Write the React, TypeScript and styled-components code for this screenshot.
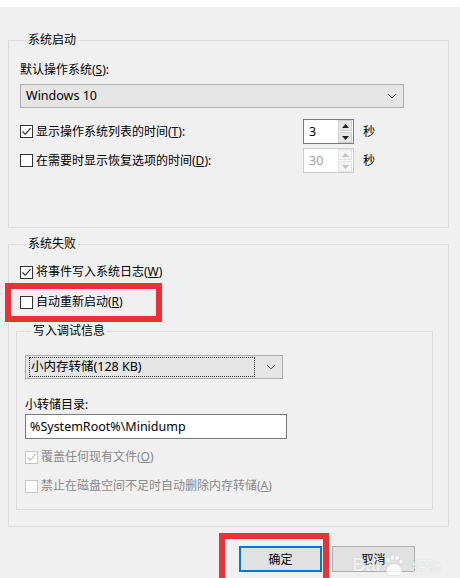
import React from 'react';
import styled, { createGlobalStyle } from 'styled-components';

const GlobalStyle = createGlobalStyle`
	body {
		margin: 0;
		background: #f0f0f0;
		font-family: "Noto Sans", "Noto Sans CJK SC", sans-serif;
		font-size: 12px;
		color: #000;
	}
`;

const Window = styled.div`
	position: relative;
	width: 460px;
	height: 578px;
	overflow: hidden;
	background: #f0f0f0;
`;

const TopStrip = styled.div`
	height: 7px;
	background: #fff;
`;

const Page = styled.div`
	padding: 0 11px 0 8px;
`;

const Group = styled.fieldset<{ $top: number; $bottom: number }>`
	margin: ${(p) => p.$top}px 0 0 0;
	padding: 0 11px ${(p) => p.$bottom}px 11px;
	border: 1px solid #dcdcdc;
	min-width: 0;
`;

const SubGroup = styled.fieldset`
	margin: 13px 0 0 -4px;
	width: 399px;
	padding: 0 8px 15px 8px;
	border: 1px solid #dcdcdc;
`;

const Legend = styled.legend`
	margin-left: 6px;
	padding: 0 2px;
	line-height: 16px;
	color: #000;
`;

const Label = styled.div<{ $top: number }>`
	margin-top: ${(p) => p.$top}px;
	line-height: 16px;
`;

const Select = styled.div<{ $width: number; $top: number }>`
	display: flex;
	align-items: center;
	justify-content: space-between;
	box-sizing: border-box;
	width: ${(p) => p.$width}px;
	height: 24px;
	margin-top: ${(p) => p.$top}px;
	padding: 0 6px 0 4px;
	background: #e5e5e5;
	border: 1px solid #adadad;
	font-size: 12.5px;
`;

const SelectText = styled.span<{ $focus?: boolean }>`
	flex: 1;
	line-height: 18px;
	padding-left: 1px;
	margin-right: 12px;
	outline: ${(p) => (p.$focus ? '1px dotted #333' : 'none')};
`;

const TextInput = styled.div`
	box-sizing: border-box;
	width: 262px;
	height: 25px;
	margin-top: 1px;
	padding: 0 4px;
	background: #fff;
	border: 1px solid #7a7a7a;
	line-height: 23px;
	font-size: 12.5px;
`;

const TimeRow = styled.div<{ $top: number }>`
	display: grid;
	grid-template-columns: 283px 51px auto;
	align-items: center;
	margin-top: ${(p) => p.$top}px;
`;

const Spin = styled.div<{ $disabled?: boolean }>`
	display: flex;
	box-sizing: border-box;
	height: 25px;
	background: #fff;
	border: 1px solid ${(p) => (p.$disabled ? '#cccccc' : '#7a7a7a')};
	color: ${(p) => (p.$disabled ? '#a0a0a0' : '#000')};
	font-size: 12.5px;
`;

const SpinValue = styled.span`
	flex: 1;
	padding-left: 5px;
	line-height: 23px;
`;

const SpinButtons = styled.div`
	display: flex;
	flex-direction: column;
	justify-content: center;
	gap: 1px;
	width: 14px;
	margin-right: 1px;
`;

const SpinButton = styled.div<{ $disabled?: boolean }>`
	display: flex;
	align-items: center;
	justify-content: center;
	height: 10px;
	background: ${(p) => (p.$disabled ? '#f4f4f4' : '#e6e6e6')};
	border: 1px solid ${(p) => (p.$disabled ? '#e2e2e2' : '#cfcfcf')};
`;

const Unit = styled.span`
	padding-left: 9px;
	line-height: 16px;
`;

const CheckRow = styled.label<{ $top: number; $disabled?: boolean }>`
	display: flex;
	align-items: center;
	gap: 3px;
	margin-top: ${(p) => p.$top}px;
	line-height: 16px;
	color: ${(p) => (p.$disabled ? '#8a8a8a' : '#000')};
`;

const Box = styled.span<{ $disabled?: boolean }>`
	display: inline-flex;
	align-items: center;
	justify-content: center;
	box-sizing: border-box;
	width: 13px;
	height: 13px;
	background: #fff;
	border: 1px solid ${(p) => (p.$disabled ? '#c4c4c4' : '#333')};
`;

const ButtonRow = styled.div`
	display: flex;
	justify-content: flex-end;
	gap: 10px;
	margin-top: 19px;
	padding-right: 34px;
`;

const Button = styled.div<{ $primary?: boolean }>`
	box-sizing: border-box;
	width: 83px;
	height: 26px;
	display: flex;
	align-items: center;
	justify-content: center;
	background: #e1e1e1;
	border: ${(p) => (p.$primary ? '2px solid #0078d7' : '1px solid #adadad')};
	font-size: 12px;
`;

const Highlight = styled.div<{ $x: number; $y: number; $w: number; $h: number }>`
	position: absolute;
	left: ${(p) => p.$x}px;
	top: ${(p) => p.$y}px;
	width: ${(p) => p.$w}px;
	height: ${(p) => p.$h}px;
	box-sizing: border-box;
	border: 6px solid #e8323a;
	pointer-events: none;
`;

const Watermark = styled.div`
	position: absolute;
	left: 352px;
	top: 554px;
	display: flex;
	align-items: center;
	gap: 3px;
	color: rgba(255, 255, 255, 0.8);
	text-shadow: 0 0 1px rgba(0, 0, 0, 0.2);
	pointer-events: none;
`;

const WmLatin = styled.span`
	font-family: "Liberation Sans", sans-serif;
	font-weight: bold;
	font-size: 19px;
	letter-spacing: -0.5px;
`;

const WmCjk = styled.span`
	font-size: 15px;
	margin-left: 4px;
`;

function Check({ checked, disabled }: { checked?: boolean; disabled?: boolean }) {
	return (
		<Box $disabled={disabled}>
			{checked && (
				<svg width="11" height="11" viewBox="0 0 11 11">
					<path d="M1.5 5.5 L4.3 8.3 L9.6 2.2" fill="none" stroke={disabled ? '#b5b5b5' : '#222'} strokeWidth="1.1" />
				</svg>
			)}
		</Box>
	);
}

function Chevron() {
	return (
		<svg width="10" height="6" viewBox="0 0 10 6">
			<path d="M1 1 L5 5 L9 1" fill="none" stroke="#606060" strokeWidth="1" />
		</svg>
	);
}

function Arrow({ up, disabled }: { up?: boolean; disabled?: boolean }) {
	return (
		<svg width="7" height="4" viewBox="0 0 7 4">
			<path d={up ? 'M0 4 L3.5 0 L7 4 Z' : 'M0 0 L3.5 4 L7 0 Z'} fill={disabled ? '#c0c0c0' : '#222'} />
		</svg>
	);
}

function SpinBox({ value, disabled }: { value: string; disabled?: boolean }) {
	return (
		<Spin $disabled={disabled}>
			<SpinValue>{value}</SpinValue>
			<SpinButtons>
				<SpinButton $disabled={disabled}>
					<Arrow up disabled={disabled} />
				</SpinButton>
				<SpinButton $disabled={disabled}>
					<Arrow disabled={disabled} />
				</SpinButton>
			</SpinButtons>
		</Spin>
	);
}

export default function App() {
	return (
		<Window>
			<GlobalStyle />
			<TopStrip />
			<Page>
				<Group $top={25} $bottom={54}>
					<Legend>系统启动</Legend>
					<Label $top={14}>
						默认操作系统(<u>S</u>):
					</Label>
					<Select $width={384} $top={6}>
						<SelectText>Windows 10</SelectText>
						<Chevron />
					</Select>
					<TimeRow $top={11}>
						<CheckRow $top={0}>
							<Check checked />
							<span>
								显示操作系统列表的时间(<u>T</u>):
							</span>
						</CheckRow>
						<SpinBox value="3" />
						<Unit>秒</Unit>
					</TimeRow>
					<TimeRow $top={4}>
						<CheckRow $top={0}>
							<Check />
							<span>
								在需要时显示恢复选项的时间(<u>D</u>):
							</span>
						</CheckRow>
						<SpinBox value="30" disabled />
						<Unit>秒</Unit>
					</TimeRow>
				</Group>

				<Group $top={8} $bottom={16}>
					<Legend>系统失败</Legend>
					<CheckRow $top={12}>
						<Check checked />
						<span>
							将事件写入系统日志(<u>W</u>)
						</span>
					</CheckRow>
					<CheckRow $top={14}>
						<Check />
						<span>
							自动重新启动(<u>R</u>)
						</span>
					</CheckRow>
					<SubGroup>
						<Legend>写入调试信息</Legend>
						<Select $width={258} $top={16}>
							<SelectText $focus>小内存转储(128 KB)</SelectText>
							<Chevron />
						</Select>
						<Label $top={18}>小转储目录:</Label>
						<TextInput>%SystemRoot%\Minidump</TextInput>
						<CheckRow $top={10} $disabled>
							<Check checked disabled />
							<span>
								覆盖任何现有文件(<u>O</u>)
							</span>
						</CheckRow>
						<CheckRow $top={13} $disabled>
							<Check disabled />
							<span>
								禁止在磁盘空间不足时自动删除内存转储(<u>A</u>)
							</span>
						</CheckRow>
					</SubGroup>
				</Group>

				<ButtonRow>
					<Button $primary>确定</Button>
					<Button>取消</Button>
				</ButtonRow>
			</Page>

			<Highlight $x={5} $y={283} $w={157} $h={39} />
			<Highlight $x={219} $y={533} $w={110} $h={52} />

			<Watermark>
				<WmLatin>Bai</WmLatin>
				<svg width="22" height="22" viewBox="0 0 22 22">
					<g fill="rgba(255,255,255,0.8)" stroke="rgba(0,0,0,0.15)" strokeWidth="0.5">
						<ellipse cx="5" cy="6" rx="2.2" ry="2.8" />
						<ellipse cx="9.5" cy="3.5" rx="2.2" ry="2.8" />
						<ellipse cx="14" cy="4" rx="2.2" ry="2.8" />
						<ellipse cx="18" cy="7.5" rx="2" ry="2.6" />
						<path d="M3 18 C3 12 8 9.5 11 9.5 C14 9.5 19 12 19 18 C19 21 16 21.5 11 21.5 C6 21.5 3 21 3 18 Z" />
					</g>
				</svg>
				<WmCjk>经验</WmCjk>
			</Watermark>
		</Window>
	);
}
